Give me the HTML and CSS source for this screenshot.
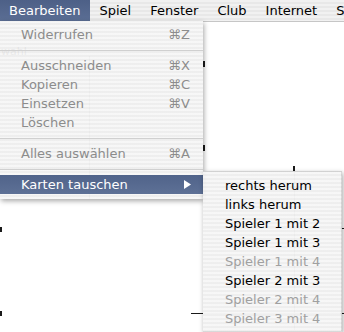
FILE: index.html
```html
<!DOCTYPE html>
<html lang="de">
<head>
    <meta charset="UTF-8">
    <title>Bearbeiten</title>
    <link rel="stylesheet" href="styles.css">
</head>
<body>

<div class="screen">
    <!-- Fenster unter den Menüs -->
    <svg class="backdrop" width="344" height="332">
        <text class="ghost" x="1" y="55">wahl</text>
        <g class="grid">
            <line x1="89.5" y1="56" x2="89.5" y2="199"/>
            <line x1="294.5" y1="171" x2="294.5" y2="330"/>
            <line x1="203" y1="228.5" x2="342" y2="228.5"/>
            <line x1="203" y1="313.5" x2="342" y2="313.5"/>
        </g>
        <g class="ticks">
            <rect x="203" y="61" width="2" height="6"/>
            <rect x="203" y="145" width="2" height="6"/>
            <rect x="0" y="227" width="2" height="5"/>
            <rect x="0" y="311" width="2" height="5"/>
            <rect x="293" y="166" width="2" height="5"/>
            <rect x="191" y="313" width="12" height="1"/>
            <rect x="340" y="313" width="4" height="1"/>
            <rect x="340" y="228" width="4" height="1"/>
        </g>
    </svg>

    <!-- Menüleiste -->
    <nav class="menubar">
        <span class="title active">Bearbeiten</span>
        <span class="title">Spiel</span>
        <span class="title">Fenster</span>
        <span class="title">Club</span>
        <span class="title">Internet</span>
        <span class="title">S</span>
    </nav>

    <!-- Menü Bearbeiten -->
    <div class="menu edit">
        <div class="item off"><span>Widerrufen</span><span class="key">⌘Z</span></div>
        <div class="sep"></div>
        <div class="item off"><span>Ausschneiden</span><span class="key">⌘X</span></div>
        <div class="item off"><span>Kopieren</span><span class="key">⌘C</span></div>
        <div class="item off"><span>Einsetzen</span><span class="key">⌘V</span></div>
        <div class="item off"><span>Löschen</span></div>
        <div class="sep"></div>
        <div class="item off"><span>Alles auswählen</span><span class="key">⌘A</span></div>
        <div class="sep"></div>
        <div class="item current">
            <span>Karten tauschen</span>
            <svg class="arrow" width="7" height="9" viewBox="0 0 7 9"><polygon points="0,0 7,4.5 0,9"/></svg>
        </div>
    </div>

    <!-- Untermenü Karten tauschen -->
    <div class="menu sub">
        <div class="item">rechts herum</div>
        <div class="item">links herum</div>
        <div class="item">Spieler 1 mit 2</div>
        <div class="item">Spieler 1 mit 3</div>
        <div class="item off">Spieler 1 mit 4</div>
        <div class="item">Spieler 2 mit 3</div>
        <div class="item off">Spieler 2 mit 4</div>
        <div class="item off">Spieler 3 mit 4</div>
    </div>
</div>

</body>
</html>
```

FILE: styles.css
```css
* {
    margin: 0;
    padding: 0;
    box-sizing: border-box;
}
body {
    font-family: "DejaVu Sans", "Lucida Grande", sans-serif;
    font-size: 13px;
    background: #fff;
    color: #000;
}
.screen {
    position: relative;
    width: 344px;
    height: 332px;
    overflow: hidden;
    background: #fff;
}
.backdrop {
    position: absolute;
    top: 0;
    left: 0;
}
.ghost {
    font-family: "DejaVu Sans", sans-serif;
    font-size: 11px;
    fill: #444;
}
.grid line {
    stroke: #b4b4b4;
    stroke-width: 1;
}
.ticks rect {
    fill: #1a1a1a;
}

/* Menüleiste */
.menubar {
    position: relative;
    display: flex;
    height: 21px;
    line-height: 21px;
    white-space: nowrap;
    background: repeating-linear-gradient(#f1f1f1 0 2px, #e8e8e8 2px 4px);
    box-shadow: 0 1px 0 #c6c6c6;
}
.title {
    padding: 0 9.5px;
}
.title:first-child {
    padding-left: 9px;
}
.title.active {
    background: linear-gradient(#4d6087, #5b6e94);
    color: #fff;
}

/* Menüs */
.menu {
    position: absolute;
    background: repeating-linear-gradient(rgba(246, 246, 246, 0.93) 0 2px, rgba(237, 237, 237, 0.93) 2px 4px);
    box-shadow: 1px 2px 5px rgba(0, 0, 0, 0.35);
}
.edit {
    top: 21px;
    left: 0;
    width: 203px;
    padding: 4px 0 5px;
}
.sub {
    top: 171px;
    left: 203px;
    width: 139px;
    padding: 4px 0 3px;
    border: 1px solid rgba(0, 0, 0, 0.12);
    border-left: none;
}
.item {
    display: flex;
    align-items: center;
    height: 19px;
    line-height: 19px;
    padding: 0 15px 0 21px;
    white-space: nowrap;
}
.sub .item {
    padding-left: 22px;
}
.item.off {
    color: #8c8c8c;
}
.sub .item.off {
    color: #a0a0a0;
}
.key {
    margin-left: auto;
    width: 20px;
}
.sep {
    height: 1px;
    margin: 6px 0 5px;
    background: #d0d0d0;
}
.item.current {
    padding-right: 12px;
    background: linear-gradient(#50638a, #5e7196);
    color: #fff;
}
.arrow {
    margin-left: auto;
    fill: #fff;
}
```
